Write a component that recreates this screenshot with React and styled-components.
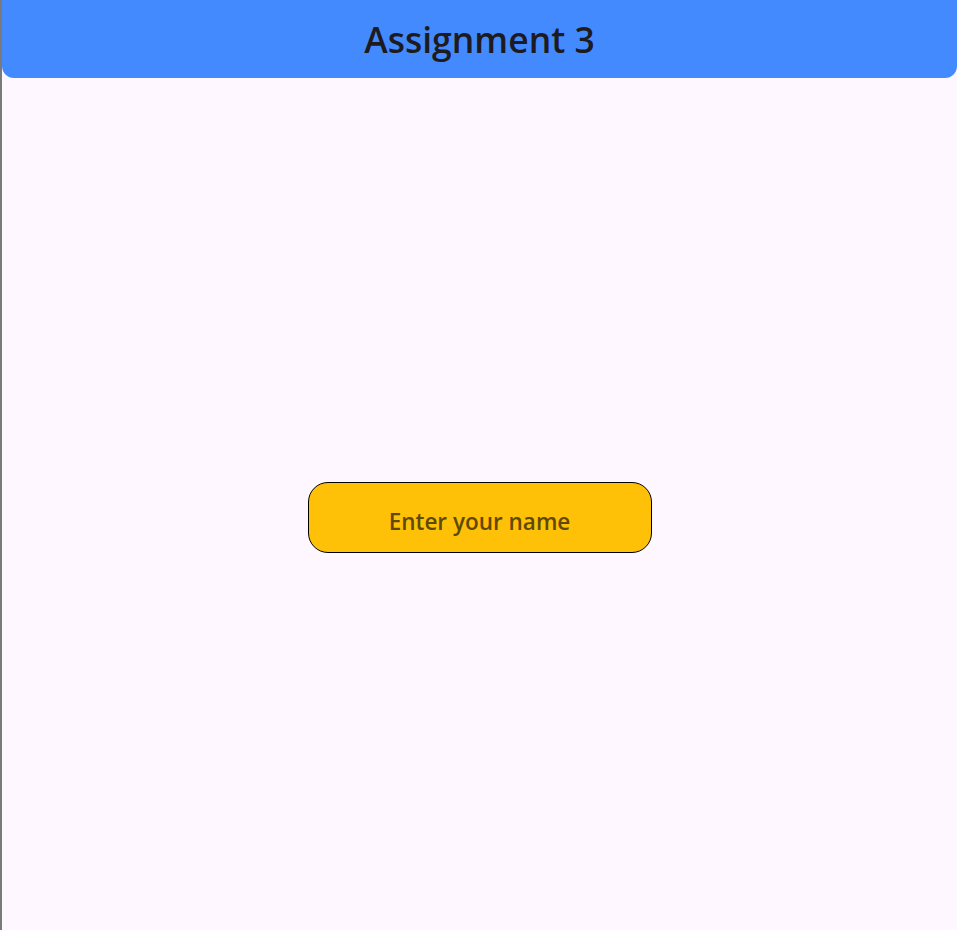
import React from 'react';
import styled, { createGlobalStyle } from 'styled-components';

const GlobalStyle = createGlobalStyle`
  html, body {
    margin: 0;
    padding: 0;
    background: #fef7ff;
  }
  * {
    box-sizing: border-box;
  }
`;

const Page = styled.div`
  display: flex;
  height: 930px;
  font-family: 'Open Sans', 'Noto Sans', sans-serif;
`;

const EdgeLine = styled.div`
  width: 2px;
  flex-shrink: 0;
  background-color: #7a7a7a;
`;

const Main = styled.div`
  flex: 1;
  display: flex;
  flex-direction: column;
  background-color: #fef7ff;
`;

const AppBar = styled.header`
  height: 78px;
  display: flex;
  align-items: center;
  justify-content: center;
  background-color: #448aff;
  border-radius: 0 0 12px 12px;
`;

const Title = styled.h1`
  margin: 0;
  font-size: 35.5px;
  font-weight: 600;
  color: #1d1b20;
  letter-spacing: 0;
`;

const Body = styled.main`
  flex: 1;
  display: flex;
  align-items: center;
  justify-content: center;
  padding-top: 27px;
`;

const NameInput = styled.input`
  width: 344px;
  height: 71px;
  padding: 8px 16px 0;
  border: 1.5px solid #000000;
  border-radius: 20px;
  background-color: #ffc107;
  font-family: 'Open Sans', 'Noto Sans', sans-serif;
  font-size: 22.5px;
  font-weight: 600;
  color: #1d1b20;
  text-align: center;
  outline: none;

  &::placeholder {
    color: #5f4a05;
  }
`;

const App = () => {
  return (
    <>
      <GlobalStyle />
      <Page>
        <EdgeLine />
        <Main>
          <AppBar>
            <Title>Assignment 3</Title>
          </AppBar>
          <Body>
            <NameInput placeholder="Enter your name" />
          </Body>
        </Main>
      </Page>
    </>
  );
};

export default App;
